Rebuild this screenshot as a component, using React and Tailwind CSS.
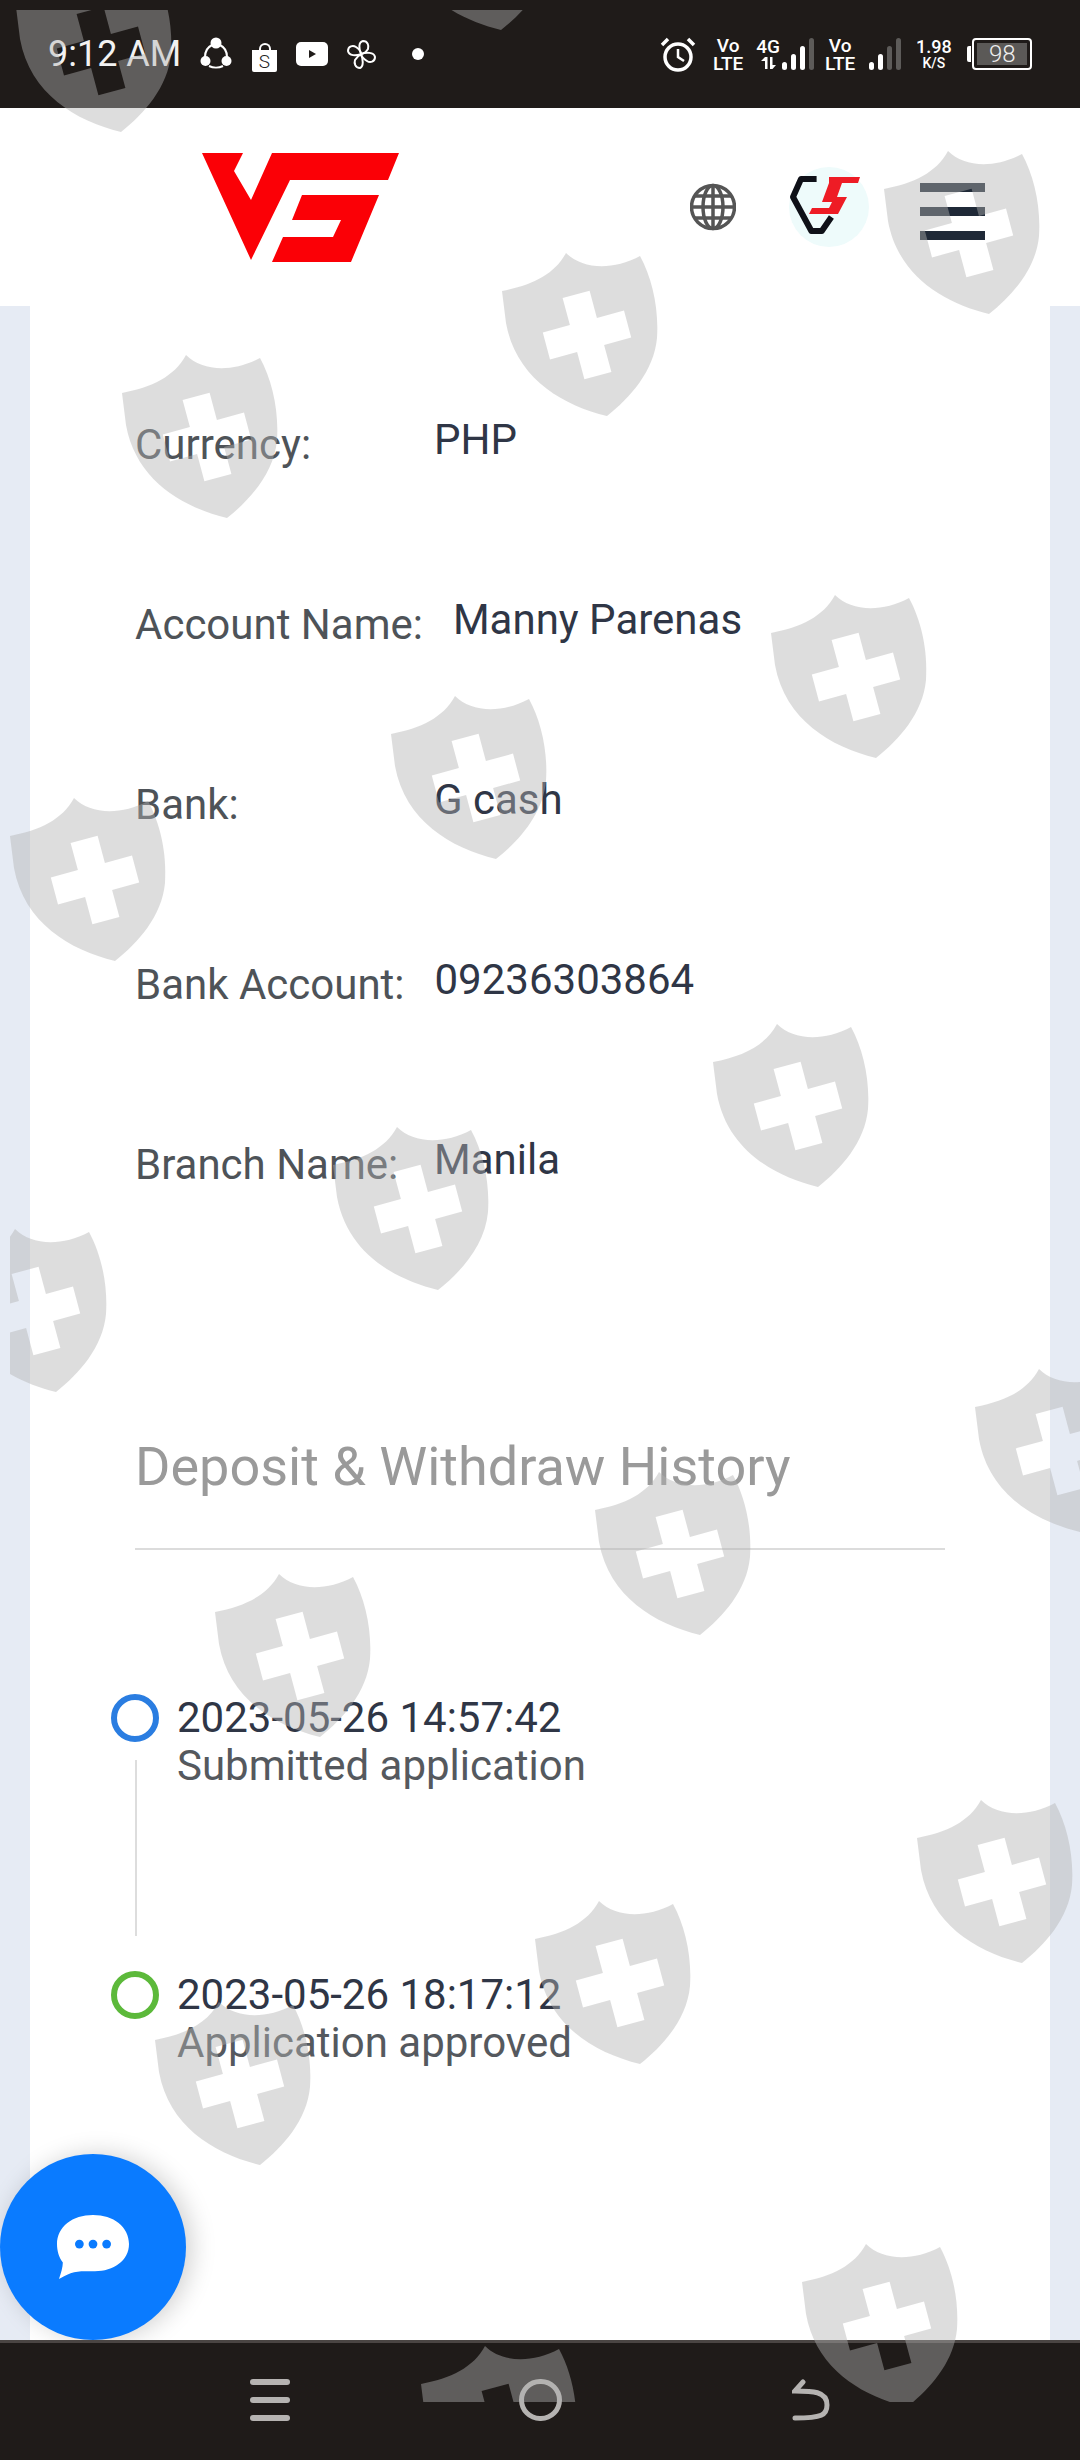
const shields = [
  [16, -31], [396, -133], [884, 151], [502, 253], [122, 355], [771, 595], [391, 696], [10, 798],
  [713, 1024], [333, 1127], [-49, 1229], [975, 1369], [595, 1472], [215, 1574], [917, 1800],
  [535, 1901], [155, 2002], [802, 2244], [421, 2346],
];

function Shield({ x, y }) {
  return (
    <svg
      className="absolute"
      style={{ left: x - 10, top: y - 10 }}
      width="157"
      height="164"
      viewBox="0 0 157 164"
    >
      <path
        fillRule="evenodd"
        fill="#b1b1b1"
        fillOpacity="0.44"
        d="M64 0C80 16 110 18 138 3C150 25 157 55 155 85C152 118 128 145 105 163C60 152 14 125 4 70L0 38C30 32 52 22 64 0ZM60.6 45L87.6 37.8L94.9 64.9L122 57.6L129.2 84.6L102.1 91.9L109.4 119L82.4 126.2L75.1 99.1L48 106.4L40.8 79.4L67.9 72.1Z"
      />
    </svg>
  );
}

function Stack({ top, bottom, className = "" }) {
  return (
    <div className={`flex flex-col items-center font-['Roboto',sans-serif] font-medium text-white ${className}`}>
      <span className="text-[19px] leading-[18px]">{top}</span>
      <span className="text-[19px] leading-[17px]">{bottom}</span>
    </div>
  );
}

function Bars({ lit }) {
  const hs = [8, 16, 24, 32];
  return (
    <svg width="32" height="34" viewBox="0 0 32 34">
      {hs.map((h, i) => (
        <rect key={i} x={i * 9} y={33 - h} width="5" height={h} rx="2.5" fill={i < lit ? "#ffffff" : "#5d5b59"} />
      ))}
    </svg>
  );
}

function StatusBar() {
  return (
    <div className="flex h-[108px] shrink-0 items-center bg-[#1f1b19] pl-[48px] text-white">
      <span className="w-[130px] whitespace-nowrap font-['Roboto',sans-serif] text-[36px] font-normal leading-none text-[#f2f2f2]">9:12 AM</span>
      <svg className="ml-[22px]" width="32" height="34" viewBox="0 0 32 34" fill="none">
        <path d="M5 20C5 14 8 10 12 8M27 20C27 14 24 10 20 8M9 29C13 31 19 31 23 29" stroke="#fff" strokeWidth="2" />
        <circle cx="16" cy="6" r="5.5" fill="#fff" />
        <circle cx="5.5" cy="24" r="5" fill="#fff" />
        <circle cx="26.5" cy="24" r="5" fill="#fff" />
      </svg>
      <div className="relative ml-[20px] mt-[14px] flex h-[22px] w-[25px] items-center justify-center rounded-b-[2px] bg-white font-['Roboto',sans-serif] text-[19px] font-light leading-none text-[#222222]">
        S
        <span className="absolute -top-[7px] h-[8px] w-[12px] rounded-t-full border-2 border-b-0 border-white" />
      </div>
      <svg className="ml-[19px]" width="32" height="24" viewBox="0 0 32 24">
        <rect width="32" height="24" rx="5" fill="#fff" />
        <path d="M13 8L20 12L13 16Z" fill="#1f1b19" />
      </svg>
      <svg className="ml-[18px]" width="31" height="31" viewBox="0 0 31 31" fill="none" stroke="#fff" strokeWidth="2">
        <path d="M15 15C10 17 3 17 2 12C2 7 7 6 10 8C13 10 15 12 15 15Z" />
        <path d="M15 15C13 10 12 3 17 2C22 2 23 7 22 10C20 13 18 15 15 15Z" />
        <path d="M15 15C20 13 28 13 29 18C29 23 24 24 21 22C18 20 15 18 15 15Z" />
        <path d="M15 15C17 20 18 27 14 29C9 29 8 24 9 21C11 18 13 16 15 15Z" />
      </svg>
      <span className="ml-[35px] h-[12px] w-[12px] rounded-full bg-white" />

      <svg className="ml-[236px]" width="36" height="36" viewBox="0 0 36 36" fill="none" stroke="#fff">
        <circle cx="18" cy="21" r="13" strokeWidth="3.5" />
        <path d="M18 13V21L24 25" strokeWidth="2.5" />
        <path d="M2 9L8 3M34 9L28 3" strokeWidth="3.5" />
      </svg>
      <Stack className="ml-[17px]" top="Vo" bottom="LTE" />
      <div className="ml-[13px] flex flex-col items-center font-['Roboto',sans-serif] font-medium leading-none text-white">
        <span className="text-[19px] leading-[18px]">4G</span>
        <svg width="15" height="14" viewBox="0 0 15 14" fill="#fff">
          <path d="M4 1V13H6.5V1ZM4 1L0 5H4ZM9 1V13H11.5V1ZM11.5 13L15 9H11.5Z" />
        </svg>
      </div>
      <div className="ml-[2px]"><Bars lit={3} /></div>
      <Stack className="ml-[11px]" top="Vo" bottom="LTE" />
      <div className="ml-[14px]"><Bars lit={2} /></div>
      <div className="ml-[13px] flex w-[39px] flex-col items-center font-['Roboto',sans-serif] font-medium leading-none text-white">
        <span className="text-[18px] leading-[18px]">1.98</span>
        <span className="text-[14px] leading-[15px]">K/S</span>
      </div>
      <div className="ml-[14px] h-[16px] w-[4px] rounded-l-[2px] bg-[#ffffff]" />
      <div className="ml-[1px] flex h-[32px] w-[60px] items-center rounded-[4px] border-2 border-white p-[3px]">
        <div className="flex h-full w-full items-center justify-center bg-[#5b5957] font-['Roboto',sans-serif] text-[24px] font-light leading-none text-[#eeeeee]">98</div>
      </div>
    </div>
  );
}

function Header() {
  return (
    <div className="flex h-[198px] shrink-0 items-center bg-white pl-[202px]">
      <svg width="197" height="109" viewBox="0 0 197 109">
        <path fill="#fb0006" d="M0 0H41L32 18L49 47L70 0H197L186 27H88L49 107Z" />
        <path fill="#fb0006" d="M100 42H177L149 109H70L81 84H131L139 67H90Z" />
      </svg>
      <svg className="ml-[291px]" width="46" height="48" viewBox="0 0 46 48" fill="none" stroke="#555555" strokeWidth="3.5">
        <circle cx="23" cy="24" r="21.5" />
        <ellipse cx="23" cy="24" rx="10" ry="21.5" />
        <path d="M23 2.5V45.5M2 24H44M5 13H41M5 35H41" />
      </svg>
      <div className="ml-[53px] flex h-[80px] w-[80px] items-center justify-center rounded-full bg-[#eefbfb]">
        <svg width="80" height="80" viewBox="0 0 80 80" fill="none">
          <path d="M27.6 12H12L4 30L22.4 64H32.8L42.4 50" stroke="#0f1118" strokeWidth="6" strokeLinejoin="round" />
          <path fill="#ee1c25" d="M40 10H71L69 16H53L48 30H58L49 47H20L23 41H40L43 35H33L40 16Z" />
        </svg>
      </div>
      <div className="ml-[51px] mt-[8px] flex w-[65px] flex-col gap-[15px]">
        <div className="h-[9px] bg-[#1f2937]" />
        <div className="h-[9px] bg-[#1f2937]" />
        <div className="h-[9px] bg-[#1f2937]" />
      </div>
    </div>
  );
}

const rows = [
  ["Currency:", "PHP"],
  ["Account Name:", "Manny Parenas"],
  ["Bank:", "G cash"],
  ["Bank Account:", "09236303864"],
  ["Branch Name:", "Manila"],
];

function Content() {
  return (
    <div className="relative flex-1 overflow-hidden bg-[#e6ebf4] px-[30px]">
      <div className="h-full bg-white pl-[105px] pr-[105px] pt-[109px] font-['Roboto',sans-serif]">
        <div className="flex flex-col gap-[130px]">
          {rows.map(([label, value]) => (
            <div key={label} className="flex h-[50px] items-start gap-[30px] text-[42px] leading-[50px]">
              <span className="mt-[5px] min-w-[269px] text-[#4e5358]">{label}</span>
              <span className="text-[#2f3646]">{value}</span>
            </div>
          ))}
        </div>
        <h2 className="mt-[250px] text-[54px] font-normal leading-[64px] text-[#9a9a9a]">Deposit &amp; Withdraw History</h2>
        <div className="mt-[49px] h-[2px] bg-[#dcdcdc]" />
        <div className="relative mt-[144px] flex flex-col gap-[181px] pl-[42px]">
          <span className="absolute bottom-[131px] left-0 top-[66px] w-[2px] bg-[#dddddd]" />
          {[
            ["2023-05-26 14:57:42", "Submitted application", "border-[#2a7de1]"],
            ["2023-05-26 18:17:12", "Application approved", "border-[#5cb93a]"],
          ].map(([date, text, ring]) => (
            <div key={date} className="relative h-[96px]">
              <span className={`absolute -left-[66px] top-0 h-[48px] w-[48px] rounded-full border-[6px] bg-white ${ring}`} />
              <div className="text-[42px] leading-[48px] text-[#2f3646]">{date}</div>
              <div className="text-[42px] leading-[48px] text-[#55595e]">{text}</div>
            </div>
          ))}
        </div>
      </div>
      <div className="absolute bottom-0 left-0 flex h-[186px] w-[186px] items-center justify-center rounded-full bg-[#0a7bff] shadow-[6px_0_24px_rgba(0,0,0,0.18)]">
        <svg width="72" height="66" viewBox="0 0 74 66">
          <path fill="#fff" d="M37 0C58 0 74 12 74 30C74 47 58 58 39 58C30 58 22 57 14 60C9 62 5 64 2 66C4 60 6 54 6 49C2 44 0 37 0 30C0 12 16 0 37 0Z" />
          <circle cx="23" cy="30" r="4.5" fill="#0a7bff" />
          <circle cx="37" cy="30" r="4.5" fill="#0a7bff" />
          <circle cx="51" cy="30" r="4.5" fill="#0a7bff" />
        </svg>
      </div>
    </div>
  );
}

function NavBar() {
  return (
    <div className="flex h-[120px] shrink-0 items-start border-t-[3px] border-[#4a4543] bg-[#1f1b19] pl-[250px] pt-[36px]">
      <div className="flex w-[40px] flex-col gap-[12px]">
        <div className="h-[6px] rounded-full bg-[#b5b3b1]" />
        <div className="h-[6px] rounded-full bg-[#b5b3b1]" />
        <div className="h-[6px] rounded-full bg-[#b5b3b1]" />
      </div>
      <span className="ml-[229px] h-[42px] w-[43px] rounded-full border-[5px] border-[#b5b3b1]" />
      <svg className="ml-[230px]" width="38" height="42" viewBox="0 0 38 42" fill="none" stroke="#b5b3b1" strokeWidth="5" strokeLinecap="round">
        <path d="M11 3L3 12C20 12 35 12 35 26C35 36 30 39 3 39" />
      </svg>
    </div>
  );
}

export default function App() {
  return (
    <div className="relative flex h-[2460px] w-[1080px] flex-col overflow-hidden bg-white">
      <StatusBar />
      <Header />
      <Content />
      <NavBar />
      <div className="pointer-events-none absolute bottom-[58px] left-[10px] right-0 top-[10px] overflow-hidden">
        {shields.map(([x, y]) => (
          <Shield key={`${x}-${y}`} x={x} y={y} />
        ))}
      </div>
    </div>
  );
}
